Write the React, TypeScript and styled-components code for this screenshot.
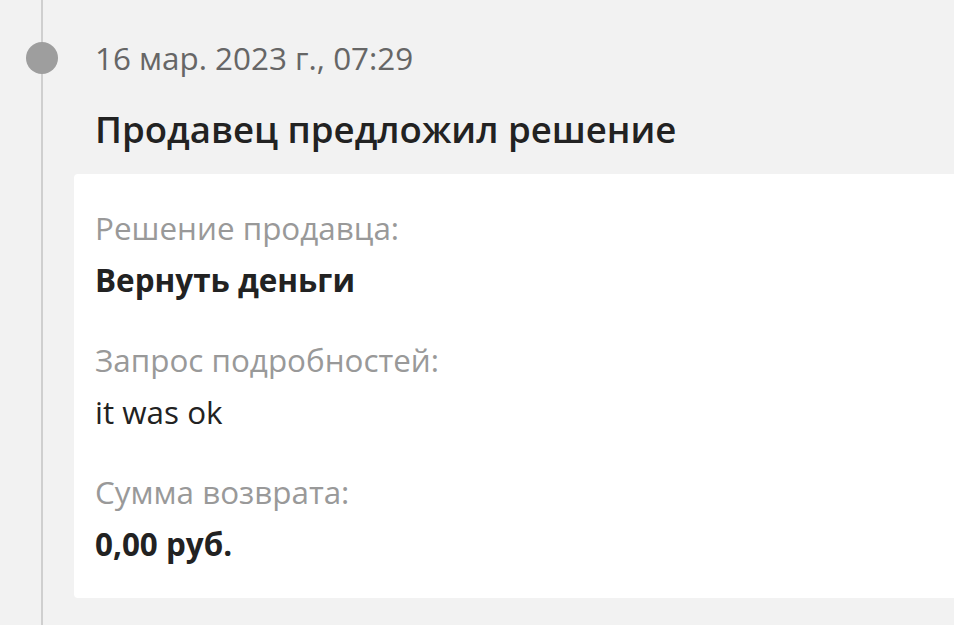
import React from "react";
import styled, { createGlobalStyle } from "styled-components";

const Global = createGlobalStyle`
  html, body { margin: 0; padding: 0; background: #f2f2f2; }
  body { font-family: "Open Sans", "Noto Sans", sans-serif; overflow: hidden; }
`;

const Page = styled.div`
  width: 954px;
  height: 625px;
  display: grid;
  grid-template-columns: 74px 1fr;
  overflow: hidden;
`;

const Rail = styled.div`
  position: relative;
  &::before {
    content: "";
    position: absolute;
    left: 41px;
    top: 0;
    bottom: 0;
    width: 2px;
    background: #cfcfcf;
  }
`;

const Dot = styled.div`
  position: absolute;
  left: 26px;
  top: 42px;
  width: 32px;
  height: 32px;
  border-radius: 50%;
  background: #9e9e9e;
`;

const Content = styled.div`
  display: flex;
  flex-direction: column;
  padding-top: 38px;
`;

const DateText = styled.div`
  margin-left: 21px;
  font-size: 31.4px;
  line-height: 40px;
  color: #666;
`;

const Title = styled.div`
  margin-left: 21px;
  margin-top: 26px;
  font-size: 36.6px;
  line-height: 50px;
  font-weight: 600;
  color: #222;
`;

const Card = styled.div`
  margin-top: 20px;
  background: #fff;
  border-radius: 4px 0 0 4px;
  padding: 28px 21px 28px 21px;
  display: flex;
  flex-direction: column;
  gap: 28px;
`;

const Field = styled.div`
  display: flex;
  flex-direction: column;
`;

const Label = styled.div`
  font-size: 31.4px;
  line-height: 52px;
  color: #999;
`;

const Value = styled.div<{ $bold?: boolean }>`
  font-size: 31.4px;
  line-height: 52px;
  color: #222;
  font-weight: ${(p) => (p.$bold ? 700 : 400)};
`;

export default function App() {
  return (
    <>
      <Global />
      <Page>
        <Rail>
          <Dot />
        </Rail>
        <Content>
          <DateText>16 мар. 2023 г., 07:29</DateText>
          <Title>Продавец предложил решение</Title>
          <Card>
            <Field>
              <Label>Решение продавца:</Label>
              <Value $bold>Вернуть деньги</Value>
            </Field>
            <Field>
              <Label>Запрос подробностей:</Label>
              <Value>it was ok</Value>
            </Field>
            <Field>
              <Label>Сумма возврата:</Label>
              <Value $bold>0,00 руб.</Value>
            </Field>
          </Card>
        </Content>
      </Page>
    </>
  );
}
